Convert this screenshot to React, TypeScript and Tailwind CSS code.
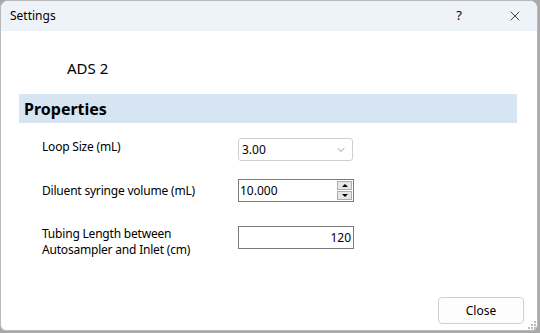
import { X, ChevronDown } from "lucide-react";

const font = { fontFamily: '"Noto Sans", "Segoe UI", Arial, sans-serif' };

function Row({ label, children, className }: { label: React.ReactNode; children: React.ReactNode; className?: string }) {
  return (
    <div className={`flex items-start ${className ?? ""}`}>
      <div className="w-[237px] shrink-0 pl-[41px] text-[12px] leading-[16px] tracking-[-0.2px] text-black">{label}</div>
      {children}
    </div>
  );
}

export default function App() {
  return (
    <div className="w-[540px] h-[333px] bg-[#a9a9a9]" style={font}>
      <div className="w-[538px] h-[331px] flex flex-col rounded-t-[8px] rounded-b-[6px] border border-[#b9b9b9] overflow-hidden bg-white">
        {/* Title bar */}
        <div className="h-[30px] shrink-0 bg-[#eef3f9] flex items-center pl-[9px]">
          <span className="text-[12px] text-black">Settings</span>
          <span className="ml-auto mr-[45px] text-[13px] text-black">?</span>
          <X className="mr-[14px] w-[16px] h-[16px] text-black" strokeWidth={1.1} />
        </div>

        {/* Content */}
        <div className="flex-1 flex flex-col relative">
          <div className="pl-[66px] pt-[27px] text-[15px] leading-[20px] text-black">ADS 2</div>

          <div className="mt-[16px] ml-[18px] w-[498px] h-[29px] bg-[#d7e4f2] flex items-center pl-[5px]">
            <span className="text-[16px] font-bold text-black">Properties</span>
          </div>

          <Row label="Loop Size (mL)" className="mt-[16px]">
            <div className="-mt-[1px] w-[115px] h-[23px] border border-[#cfcfcf] rounded-[3px] flex items-center pl-[3px] pr-[5px] text-[12px]">
              <span>3.00</span>
              <ChevronDown className="ml-auto w-[12px] h-[12px] text-[#555]" strokeWidth={1.2} />
            </div>
          </Row>

          <Row label="Diluent syringe volume (mL)" className="mt-[22px]">
            <div className="-mt-[4px] w-[116px] h-[23px] border border-[#7a7a7a] flex items-center pl-[1px] text-[12px]">
              <span>10.000</span>
              <div className="ml-auto mr-[1px] w-[15px] h-[19px] flex flex-col gap-[1px]">
                <div className="flex-1 bg-[#e6e6e6] border border-[#adadad] flex items-center justify-center">
                  <div className="w-0 h-0 border-l-[3px] border-r-[3px] border-b-[3px] border-l-transparent border-r-transparent border-b-black" />
                </div>
                <div className="flex-1 bg-[#e6e6e6] border border-[#adadad] flex items-center justify-center">
                  <div className="w-0 h-0 border-l-[3px] border-r-[3px] border-t-[3px] border-l-transparent border-r-transparent border-t-black" />
                </div>
              </div>
            </div>
          </Row>

          <Row label={<>Tubing Length between<br />Autosampler and Inlet (cm)</>} className="mt-[24px]">
            <div className="w-[116px] h-[23px] border border-[#7a7a7a] flex items-center justify-end pr-[2px] text-[12px]">
              120
            </div>
          </Row>

          <div className="mt-auto mb-[6px] flex justify-end pr-[13px]">
            <button className="w-[86px] h-[27px] border border-[#d0d0d0] rounded-[4px] bg-[#fdfdfd] text-[12px] text-black">
              Close
            </button>
          </div>

          {/* resize grip */}
          <div className="absolute right-[1px] bottom-[1px] grid grid-cols-3 gap-[1px]">
            {[0, 1, 2, 3, 4, 5, 6, 7, 8].map((i) => (
              <div key={i} className={`w-[2px] h-[2px] ${[0, 1, 3].includes(i) ? "bg-transparent" : "bg-[#bdbdbd]"}`} />
            ))}
          </div>
        </div>
      </div>
    </div>
  );
}
